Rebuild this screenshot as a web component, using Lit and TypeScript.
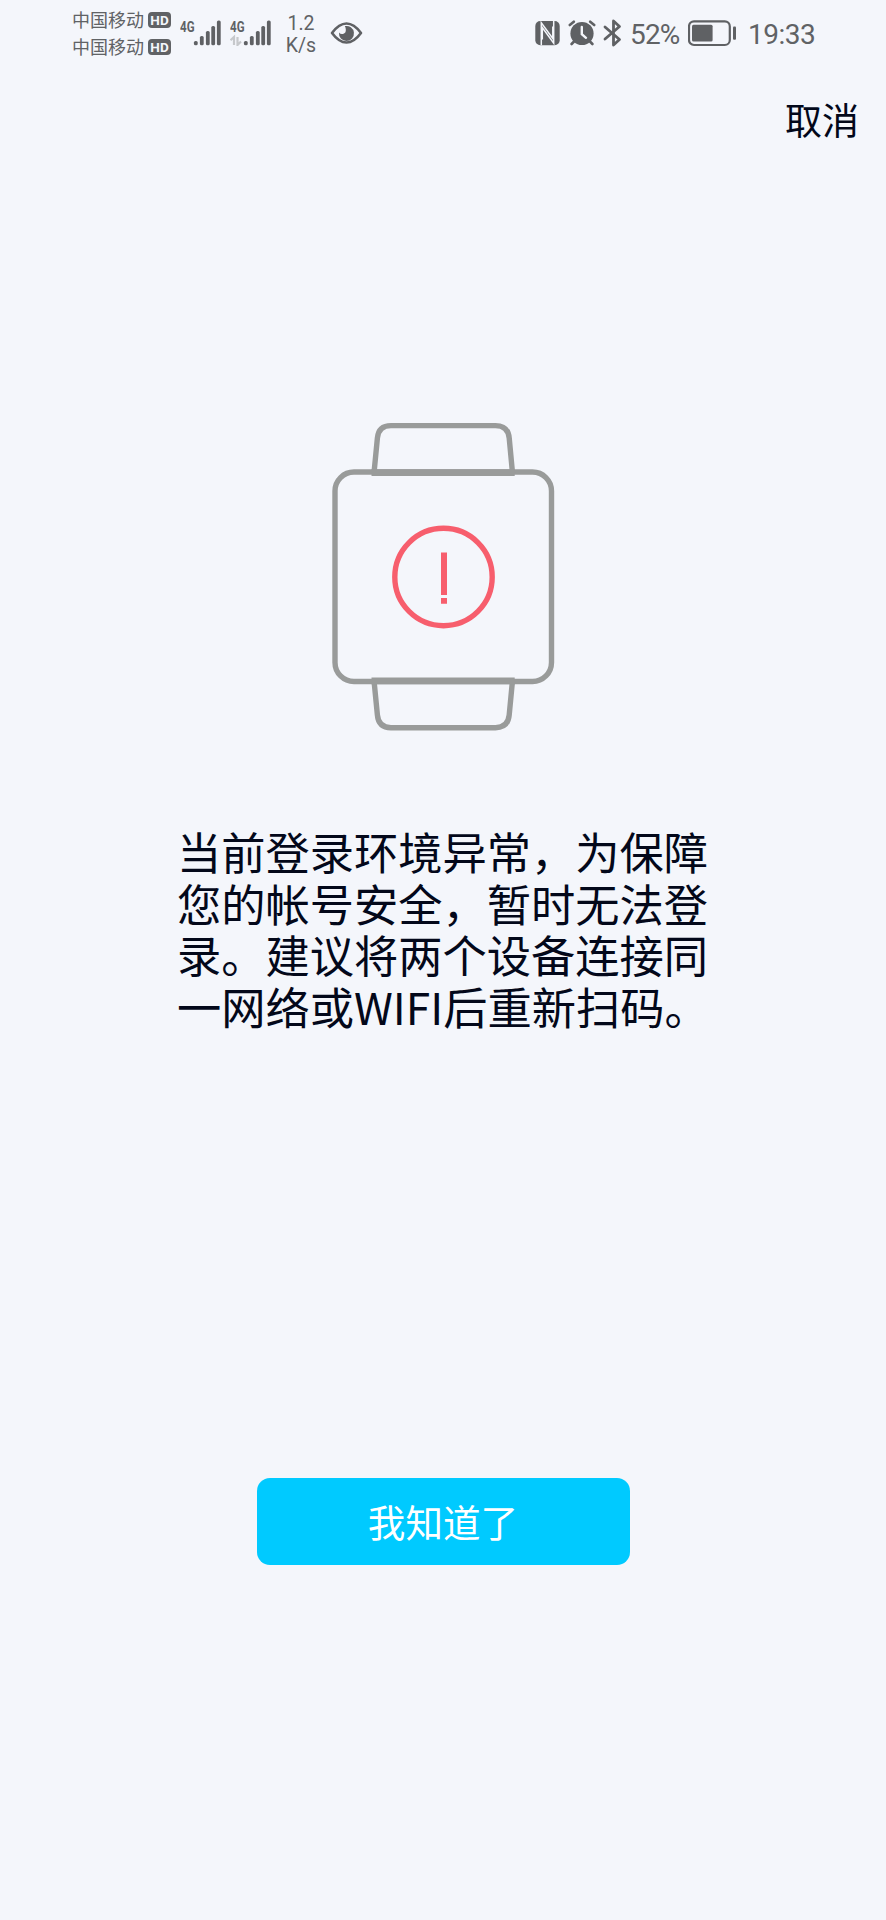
import { LitElement, html, css, svg } from "lit";
import { customElement, property } from "lit/decorators.js";

@customElement("signal-meter")
class SignalMeter extends LitElement {
  @property({ type: Boolean }) traffic = false;

  static styles = css`
    :host { display: block; width: 41px; height: 26px; }
    svg { display: block; }
    text { font: 700 14.5px "Roboto", sans-serif; fill: #5f6164; }
  `;

  render() {
    const bars = [[15.8, 21], [21.8, 16], [27.8, 11], [33.2, 6], [38.8, 0.5]];
    return html`<svg width="41" height="26" viewBox="0 0 41 26">
      <text x="0" y="11.5" textLength="14.5" lengthAdjust="spacingAndGlyphs">4G</text>
      ${bars.map(([x, y]) => svg`<rect x=${x - 1.9} y=${y} width="3.8" height=${25.3 - y} rx="1.6" fill="#5f6164"/>`)}
      ${this.traffic
        ? svg`<path d="M.5 20.3L4 17V25M7.5 17V25L11 21.5" fill="none" stroke="#c6c8cb" stroke-width="2.2"/>`
        : ""}
    </svg>`;
  }
}

@customElement("status-bar")
class StatusBar extends LitElement {
  static styles = css`
    :host {
      display: flex; height: 68px; padding: 0 71px 0 72px; box-sizing: border-box;
      font-family: "Roboto", "Noto Sans CJK SC", sans-serif; color: #606265;
    }
    svg { display: block; flex: none; }
    .carriers { display: grid; grid-template-rows: 27px 27px; padding-top: 6px; width: 108px; box-sizing: border-box; align-content: start; }
    .carrier { display: flex; align-items: center; gap: 4px; font: 18px/27px "Noto Sans CJK SC", sans-serif; white-space: nowrap; }
    .hd { width: 23px; height: 16px; border-radius: 4px; background: #606265; color: #f4f6fb; font: 700 13.5px/16px "Roboto", sans-serif; text-align: center; }
    .signals { display: flex; gap: 9px; padding-top: 20px; }
    .rate { width: 34px; margin-left: 13px; padding-top: 13px; font-size: 19.5px; line-height: 22px; text-align: center; }
    .eye { margin: 20px 0 0 12px; }
    .right { display: flex; margin-left: auto; padding-top: 19px; }
    .alarm { margin-left: 8px; }
    .bt { margin-left: 7px; }
    .num { font-size: 28px; line-height: 31px; white-space: nowrap; }
    .pct { width: 53px; margin-left: 8px; letter-spacing: -0.8px; }
    .battery { margin-left: 5px; }
    .time { width: 67px; margin-left: 11px; letter-spacing: -0.5px; }
  `;

  render() {
    const carrier = html`<div class="carrier"><span>中国移动</span><span class="hd">HD</span></div>`;
    return html`
      <div class="carriers">${carrier}${carrier}</div>
      <div class="signals"><signal-meter></signal-meter><signal-meter traffic></signal-meter></div>
      <div class="rate">1.2<br />K/s</div>
      <svg class="eye" width="33" height="26" viewBox="0 0 33 26">
        <path d="M2 13Q9 3.5 16.5 3.5T31 13Q24 22.5 16.5 22.5T2 13Z" fill="none" stroke="#5f6164" stroke-width="2.6" stroke-linejoin="round"/>
        <path d="M14.8 6.1A7.5 7.5 0 1 1 9 12.6Q10.5 14.5 13 14Q16.2 13 15.8 9.5Q15.7 7.5 14.8 6.1Z" fill="#5f6164"/>
      </svg>
      <div class="right">
        <svg class="nfc" width="25" height="28" viewBox="0 0 25 28">
          <rect x=".3" y="2" width="24.4" height="24.2" rx="5" fill="#5f6164"/>
          <path d="M6.3 26.2V3.8L17.8 19.5V7.5M18.7 2V24.2L7.3 8.5V20.5" fill="none" stroke="#f4f6fb" stroke-width="1.5"/>
        </svg>
        <svg class="alarm" width="28" height="28" viewBox="0 0 28 28">
          <g fill="none" stroke="#5f6164" stroke-width="2.6" stroke-linecap="round">
            <path d="M1.8 6L5.8 2.7M22.2 2.7L26.2 6M7 21.5L3.6 25M21 21.5L24.4 25"/>
          </g>
          <circle cx="14" cy="14.5" r="11.6" fill="#5f6164"/>
          <path d="M13.8 8V15.2L18 18.8" fill="none" stroke="#f4f6fb" stroke-width="2.4" stroke-linecap="round"/>
        </svg>
        <svg class="bt" width="19" height="28" viewBox="0 0 19 28">
          <path d="M2 8L16.5 20.5L10.5 26V2L16.5 7.5L2 20" fill="none" stroke="#5f6164" stroke-width="2.8" stroke-linejoin="round" stroke-linecap="round"/>
        </svg>
        <div class="num pct">52%</div>
        <svg class="battery" width="49" height="28" viewBox="0 0 49 28">
          <rect x="1" y="2.4" width="40.8" height="23.6" rx="5" fill="none" stroke="#5f6164" stroke-width="2.2"/>
          <rect x="4" y="5.8" width="20.6" height="16.6" rx="1.5" fill="#5f6164"/>
          <rect x="45" y="7.5" width="3" height="13.2" rx="1" fill="#5f6164"/>
        </svg>
        <div class="num time">19:33</div>
      </div>
    `;
  }
}

@customElement("app-root")
class AppRoot extends LitElement {
  static styles = css`
    :host {
      display: flex; flex-direction: column; align-items: center;
      height: 1920px; background: #f4f6fb; color: #03081a;
      font-family: "Noto Sans CJK SC", sans-serif;
    }
    status-bar { align-self: stretch; }
    .nav { align-self: stretch; display: flex; justify-content: flex-end; height: 102px; padding-right: 27px; align-items: center; box-sizing: border-box; }
    .cancel, .confirm { border: 0; font-family: inherit; cursor: pointer; }
    .cancel { background: none; padding: 0; color: #03081a; font-size: 37px; line-height: 50px; }
    .watch { display: block; margin-top: 240px; }
    .message { margin: 86px 0 0; width: 532px; font-size: 44.25px; line-height: 51.7px; white-space: nowrap; }
    .line { display: block; }
    .confirm {
      margin-top: 445px; width: 373px; height: 87px; border-radius: 13px; padding: 0;
      background: #00caff; color: #fff; font-size: 37.6px; line-height: 86px;
    }
  `;

  render() {
    const lines = ["当前登录环境异常，为保障", "您的帐号安全，暂时无法登", "录。建议将两个设备连接同", "一网络或WIFI后重新扫码。"];
    return html`
      <status-bar></status-bar>
      <div class="nav"><button class="cancel">取消</button></div>
      <svg class="watch" width="246" height="330" viewBox="0 0 246 330">
        <g fill="none" stroke="#999b9a" stroke-width="5.4">
          <rect x="15" y="62" width="216.5" height="209.5" rx="19"/>
          <path d="M54 63L57.4 28Q58.5 15.6 71 15.6H175.5Q188 15.6 189.2 28L192.5 63"/>
          <path d="M54 270.5L57.4 305Q58.5 317.7 71 317.7H175.5Q188 317.7 189.2 305L192.5 270.5"/>
        </g>
        <path d="M51.5 59.3H194.7V66H51.5ZM51.5 267.5H194.7V274.2H51.5Z" fill="#999b9a"/>
        <circle cx="123.5" cy="167" r="48.7" fill="none" stroke="#f75e6d" stroke-width="5.4"/>
        <path d="M121 142.5H127V185H121ZM121 188H127V193.8H121Z" fill="#f75e6d"/>
      </svg>
      <p class="message">${lines.map((l) => html`<span class="line">${l}</span>`)}</p>
      <button class="confirm">我知道了</button>
    `;
  }
}
